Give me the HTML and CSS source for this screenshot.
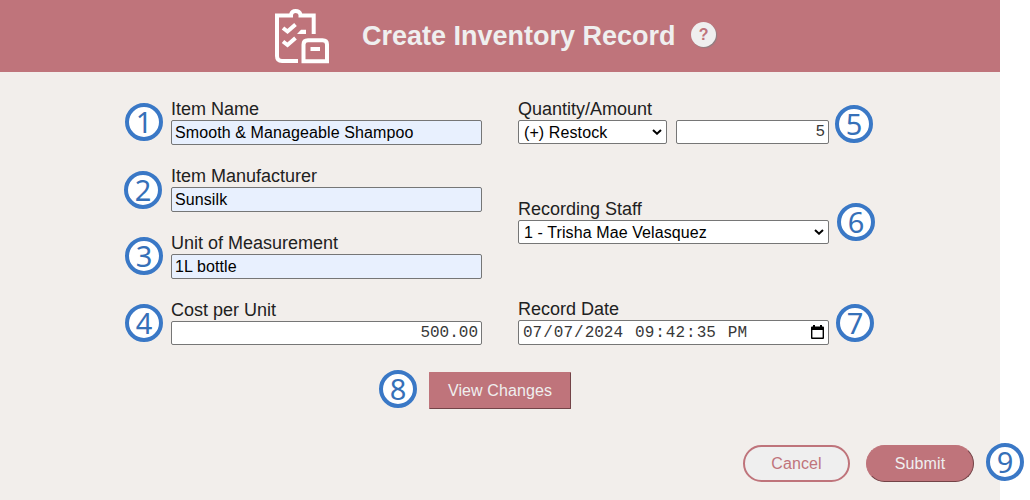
FILE: index.html
```html
<!DOCTYPE html>
<html lang="en">
<head>
<meta charset="utf-8">
<title>Create Inventory Record</title>
<link rel="stylesheet" href="styles.css">
</head>
<body>
<main class="panel">
  <header class="header">
    <svg class="logo" width="56" height="56" viewBox="0 0 56 56" fill="none" stroke="#fff" stroke-width="4">
      <path d="M24 53H8Q3 53 3 48V7.500H17V6.500Q18 3 21.500 3Q25.500 3 26.500 6.500V7.500H39.700V26"/>
      <path d="M9 20L13.500 23.500L21.500 16.500M9 33.500L13.500 37L21.500 30"/>
      <path d="M23 26L27 21.700H32V26Z" fill="#fff" stroke="none"/>
      <path d="M29.500 53.200V36.500Q29.500 32.300 34 32.300H48.500Q53 32.300 53 36.500V53.200Z"/>
      <path d="M36.500 41H46"/>
    </svg>
    <h1 class="title">Create Inventory Record</h1>
    <span class="help">?</span>
  </header>
  <form class="form">
    <div class="columns">
      <div class="column">
        <label class="field">Item Name<input class="control filled" value="Smooth &amp; Manageable Shampoo"></label>
        <label class="field">Item Manufacturer<input class="control filled" value="Sunsilk"></label>
        <label class="field">Unit of Measurement<input class="control filled" value="1L bottle"></label>
        <label class="field">Cost per Unit<input class="control number" value="500.00"></label>
      </div>
      <div class="column right">
        <div class="field">Quantity/Amount
          <div class="pair">
            <div class="control select">(+) Restock<svg class="chevron" width="10" height="6" viewBox="0 0 10 6"><path d="M1 1L5 4.700L9 1"/></svg></div>
            <input class="control number" value="5">
          </div>
        </div>
        <div class="field">Recording Staff
          <div class="control select">1 - Trisha Mae Velasquez<svg class="chevron" width="10" height="6" viewBox="0 0 10 6"><path d="M1 1L5 4.700L9 1"/></svg></div>
        </div>
        <div class="field">Record Date
          <div class="control date"><span>07</span>/<span>07</span>/<span class="part-end">2024</span><span>09</span>:<span>42</span>:<span class="part-end">35</span><span>PM</span>
            <svg class="calendar" width="13" height="14" viewBox="0 0 13 14"><path d="M2 0H4V1.500H9V0H11V1.500H12Q13 1.500 13 2.500V13Q13 14 12 14H1Q0 14 0 13V2.500Q0 1.500 1 1.500H2ZM1.400 5V12.600H11.600V5Z" fill="#000" fill-rule="evenodd"/></svg>
          </div>
        </div>
      </div>
    </div>
    <button type="button" class="button view">View Changes</button>
    <div class="actions">
      <button type="button" class="button pill cancel">Cancel</button>
      <button type="button" class="button pill">Submit</button>
    </div>
  </form>
</main>
<span class="marker m1">1</span>
<span class="marker m2">2</span>
<span class="marker m3">3</span>
<span class="marker m4">4</span>
<span class="marker m5">5</span>
<span class="marker m6">6</span>
<span class="marker m7">7</span>
<span class="marker m8">8</span>
<span class="marker m9">9</span>
</body>
</html>
```
FILE: styles.css
```css
* { box-sizing: border-box; }
body {
  margin: 0;
  height: 500px;
  overflow: hidden;
  background: #fff;
  font-family: "Liberation Sans", Arial, sans-serif;
  color: #212121;
}
.panel { width: 1000px; height: 500px; background: #f2eeeb; }
.header {
  display: flex;
  align-items: center;
  height: 72px;
  padding-left: 274px;
  background: #bf747b;
}
.title {
  margin: 0 0 0 32px;
  font-size: 27px;
  line-height: 32px;
  color: #efefef;
  white-space: nowrap;
}
.help {
  width: 25px;
  height: 25px;
  margin: -4px 0 0 15px;
  border-radius: 50%;
  background: #efefef;
  box-shadow: 1px 1px 1px #8f7f82;
  color: #bf747b;
  font-size: 16px;
  font-weight: bold;
  line-height: 25px;
  text-align: center;
  text-indent: 1px;
}
.form { padding: 27px 26px 0 171px; }
.columns { display: flex; gap: 36px; }
.column { display: flex; flex-direction: column; gap: 21px; width: 311px; }
.right { gap: 55px; }
.field { display: block; font-size: 18px; line-height: 21px; }
.control {
  display: block;
  width: 100%;
  height: 25px;
  margin: 0;
  padding: 1px 3px;
  border: 1px solid #767676;
  border-radius: 2px;
  background: #fff;
  color: #000;
  font: 16px/21px "Liberation Sans", Arial, sans-serif;
  letter-spacing: 0.1px;
}
.filled { background: #e8f0fe; }
.number, .date {
  font-family: "Liberation Mono", "Courier New", monospace;
  letter-spacing: 0;
  color: #383838;
}
.number { height: 24px; text-align: right; }
.pair { display: flex; gap: 9px; }
.pair .select { width: 149px; }
.pair .number { width: 153px; }
.select {
  display: flex;
  align-items: center;
  justify-content: space-between;
  height: 24px;
  padding: 0 4px 0 5px;
}
.chevron { fill: none; stroke: #000; stroke-width: 2; }
.date { display: flex; align-items: center; padding: 2px 4px 0 3px; }
.date span { padding: 0 1px; }
.date .part-end { margin-right: 10px; }
.calendar { margin: -4px 0 0 auto; }
.button {
  display: block;
  height: 37px;
  padding: 0;
  border: 1px solid #bf747b;
  border-right-color: #734347;
  border-bottom-color: #734347;
  border-radius: 1px;
  background: #bf747b;
  color: #efefef;
  font: 16px/20px "Liberation Sans", Arial, sans-serif;
  letter-spacing: 0.1px;
}
.view { width: 142px; margin: 27px 0 0 258px; }
.actions { display: flex; justify-content: flex-end; gap: 16px; margin-top: 36px; }
.pill { width: 108px; border-radius: 19px; }
.cancel { width: 107px; border: 2px solid #bf747b; background: #efefef; color: #bf747b; }
.marker {
  position: absolute;
  width: 38px;
  height: 38px;
  border: 4px solid #3a78c6;
  border-radius: 50%;
  background: #fff;
  color: #3670b8;
  font: 29px/30px "Noto Sans", "Open Sans", sans-serif;
  text-align: center;
}
.m1 { left: 125px; top: 103px; }
.m2 { left: 124px; top: 171px; }
.m3 { left: 125px; top: 237px; }
.m4 { left: 125px; top: 304px; }
.m5 { left: 835px; top: 105px; }
.m6 { left: 837px; top: 203px; }
.m7 { left: 836px; top: 304px; }
.m8 { left: 379px; top: 370px; }
.m9 { left: 986px; top: 443px; }
```
